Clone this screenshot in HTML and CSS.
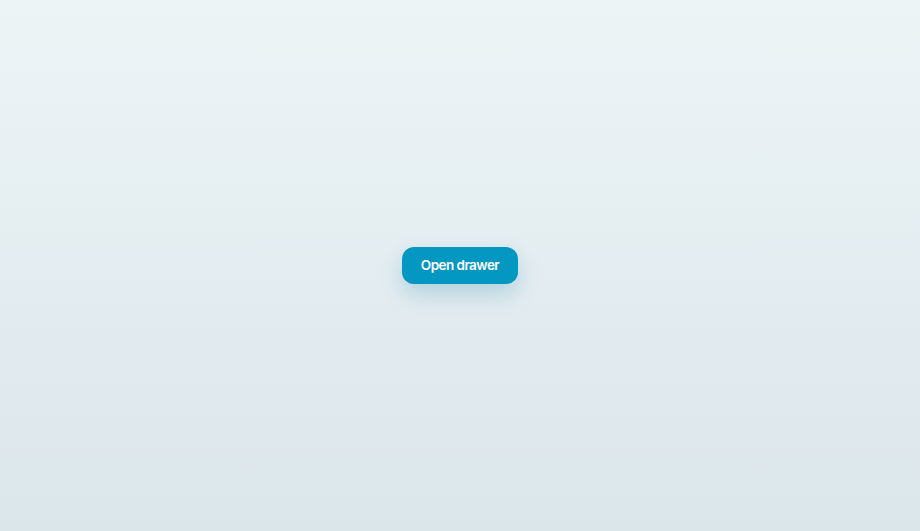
FILE: index.html
```html
<!DOCTYPE html>
<html lang="en">
<head>
<meta charset="utf-8">
<title>Drawer</title>
<link rel="stylesheet" href="styles.css">
</head>
<body>
<main class="stage">
  <button class="open-btn" type="button">Open drawer</button>
</main>
</body>
</html>
```
FILE: styles.css
```css
html, body {
  margin: 0;
  padding: 0;
  height: 100%;
}
body {
  background: linear-gradient(180deg, #ecf4f6 0%, #dbe6eb 100%);
  font-family: Inter, "Noto Sans", sans-serif;
}
.stage {
  height: 100vh;
  display: flex;
  align-items: center;
  justify-content: center;
}
.open-btn {
  font-family: "Inter", sans-serif;
  font-size: 13.5px;
  font-weight: 600;
  letter-spacing: -0.55px;
  line-height: 17px;
  color: #ffffff;
  background: #0497c2;
  border: none;
  border-radius: 12px;
  padding: 10px 19px;
  box-shadow: 0 10px 22px rgba(3, 120, 160, 0.22);
  cursor: pointer;
}
```
